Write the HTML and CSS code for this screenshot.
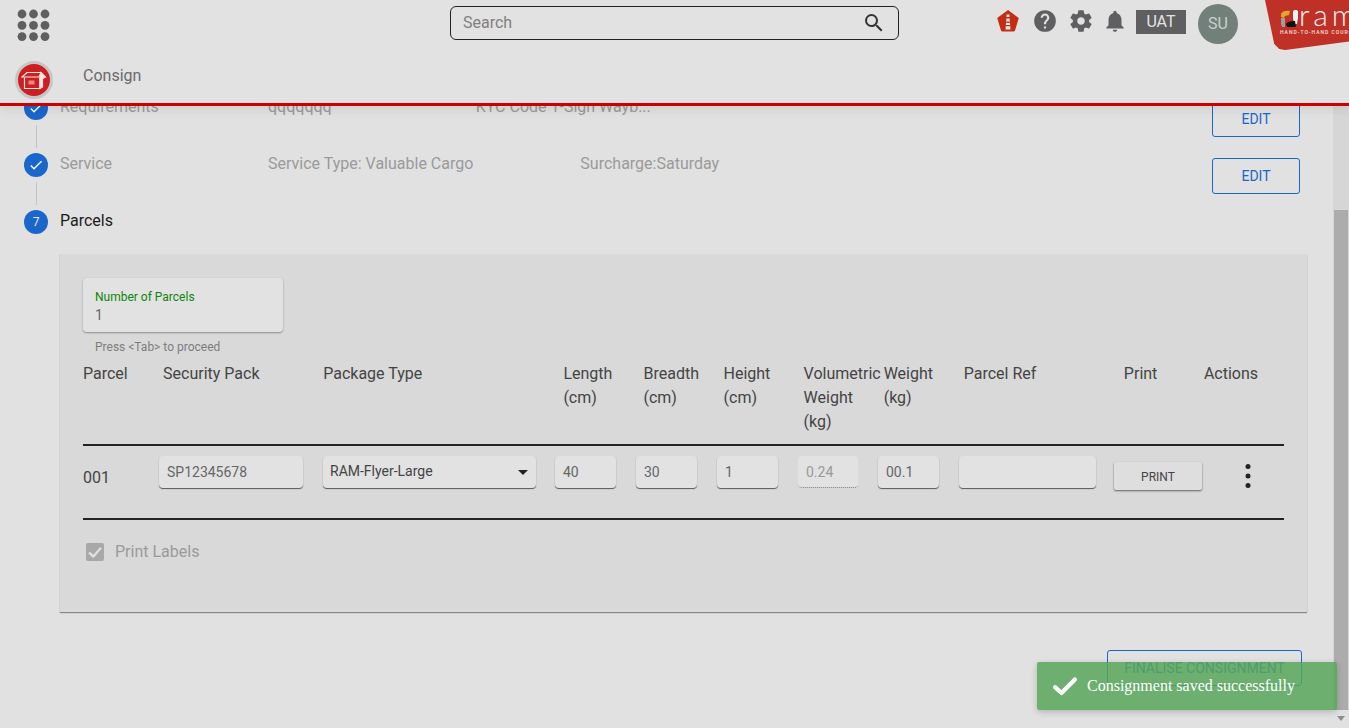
FILE: index.html
```html
<!DOCTYPE html>
<html lang="en">
<head>
  <meta charset="UTF-8" />
  <title>Consign</title>
  <link rel="stylesheet" href="styles.css">
</head>
<body>
  <div class="app">
    <header class="topbar">
      <div class="topbar-row">
        <svg class="apps-icon" width="34" height="34" viewBox="0 0 34 34">
          <g fill="#5f5f5f">
            <circle cx="5" cy="5" r="4.4"/><circle cx="16.500" cy="5" r="4.4"/><circle cx="28" cy="5" r="4.4"/>
            <circle cx="5" cy="16.300" r="4.4"/><circle cx="16.500" cy="16.300" r="4.4"/><circle cx="28" cy="16.300" r="4.4"/>
            <circle cx="5" cy="27.600" r="4.4"/><circle cx="16.500" cy="27.600" r="4.4"/><circle cx="28" cy="27.600" r="4.4"/>
          </g>
        </svg>
        <div class="search">
          <span class="search-text">Search</span>
          <svg width="24" height="24" viewBox="0 0 24 24"><path fill="#333" d="M15.500 14h-.79l-.28-.27A6.470 6.470 0 0 0 16 9.500 6.500 6.500 0 1 0 9.500 16c1.610 0 3.090-.59 4.230-1.570l.27.28v.79l5 4.990L20.490 19l-4.990-5zm-6 0C7.010 14 5 11.990 5 9.500S7.010 5 9.500 5 14 7.010 14 9.500 11.990 14 9.500 14z"/></svg>
        </div>
        <div class="tools">
          <svg class="tool-light" width="24" height="24" viewBox="0 0 24 24">
            <path fill="#c42d14" d="M12 1 22.800 9 19 21.500a1.500 1.500 0 0 1-1.400 1H6.400a1.500 1.500 0 0 1-1.400-1L1.200 9z"/>
            <path fill="#e8e8e8" d="M10.500 5.500h3v2.500h-3zM10.400 9.500h3.200l.9 11h-5z"/>
            <path fill="#c42d14" d="M9.800 12.500h4.400v1.200H9.800zM9.600 16h4.800v1.200H9.600z"/>
          </svg>
          <svg class="tool-help" width="26" height="26" viewBox="0 0 24 24"><path fill="#5f5e60" d="M12 2a10 10 0 1 0 0 20 10 10 0 0 0 0-20zm1 17h-2v-2h2v2zm2.070-7.750-.9.920C13.450 12.900 13 13.500 13 15h-2v-.5c0-1.100.45-2.100 1.170-2.830l1.240-1.260c.37-.36.590-.86.590-1.410 0-1.100-.9-2-2-2s-2 .9-2 2H8c0-2.210 1.790-4 4-4s4 1.790 4 4c0 .88-.36 1.680-.930 2.250z"/></svg>
          <svg class="tool-gear" width="26" height="26" viewBox="0 0 24 24"><path fill="#5f5e60" d="M19.430 12.980c.04-.32.070-.64.070-.98s-.03-.66-.07-.98l2.110-1.650c.19-.15.240-.42.120-.64l-2-3.460c-.12-.22-.39-.3-.61-.22l-2.490 1c-.52-.4-1.080-.73-1.690-.98l-.38-2.650A.488.488 0 0 0 14 2h-4c-.25 0-.46.18-.49.42l-.38 2.650c-.61.25-1.170.59-1.690.98l-2.490-1c-.23-.09-.49 0-.61.22l-2 3.460c-.13.22-.07.49.12.64l2.110 1.650c-.04.32-.07.65-.07.98s.03.66.07.98l-2.110 1.650c-.19.15-.24.42-.12.64l2 3.460c.12.22.39.3.61.22l2.490-1c.52.4 1.080.73 1.690.98l.38 2.650c.03.24.24.42.49.42h4c.25 0 .46-.18.49-.42l.38-2.650c.61-.25 1.170-.59 1.690-.98l2.490 1c.23.09.49 0 .61-.22l2-3.460c.12-.22.07-.49-.12-.64l-2.110-1.650zM12 15.500c-1.930 0-3.500-1.570-3.500-3.500s1.570-3.500 3.500-3.500 3.500 1.570 3.500 3.500-1.570 3.500-3.500 3.500z"/></svg>
          <svg class="tool-bell" width="26" height="26" viewBox="0 0 24 24"><path fill="#5f5e60" d="M12 22c1.100 0 2-.9 2-2h-4c0 1.100.9 2 2 2zm6-6v-5c0-3.070-1.630-5.640-4.500-6.320V4c0-.83-.67-1.500-1.500-1.500s-1.500.67-1.500 1.500v.68C7.640 5.360 6 7.920 6 11v5l-2 2v1h16v-1l-2-2z"/></svg>
          <span class="env-tag">UAT</span>
          <span class="avatar">SU</span>
        </div>
      </div>
      <div class="topbar-row nav-row">
        <span class="module-badge">
          <svg width="26" height="22" viewBox="0 0 26 22" fill="none" stroke="#f6e6e6" stroke-width="1.200">
            <path d="M3.500 8.500V19.500H19V8.500"/>
            <path d="M1 8 6 3.500H20L18 8H1z"/>
            <path d="M20 3.500 24.500 8 21.500 9.500V18L19 19.500V8.500z" fill="#f6e6e6"/>
            <rect x="7.500" y="11.500" width="6" height="4" fill="#e58a8a" stroke="none"/>
          </svg>
        </span>
        <span class="module-name">Consign</span>
      </div>
    </header>

    <div class="logo">
      <svg class="logo-mark" width="20" height="20" viewBox="0 0 20 20">
        <path fill="#e3a52a" d="M1 5c1-3 5-4 9-3l-1 4-4 1-1 2-3-1z"/>
        <path fill="#9d9d9d" d="M1 9h4v9H2l-1-3z"/>
        <path fill="#f2f2f2" d="M13 2c1-1.500 4-1.500 5 0v7l-1 6h-3l-1-6z"/>
        <path fill="#111" d="M6 15c2-3 6-3 9-3l1 6H7z"/>
      </svg>
      <span class="logo-name">ram</span>
      <span class="logo-tag">HAND-TO-HAND COURIERS</span>
    </div>

    <main class="content">
      <div class="step">
        <div class="step-mark">
          <span class="step-dot"><svg width="16" height="16" viewBox="0 0 24 24"><path fill="#fff" d="M9 16.200 4.800 12l-1.400 1.400L9 19 21 7l-1.400-1.400z"/></svg></span>
          <span class="step-line"></span>
        </div>
        <span class="step-title">Requirements</span>
        <span class="step-info col-short">qqqqqqq</span>
        <span class="step-info">KYC Code 1-Sign Wayb...</span>
        <button class="edit-btn">EDIT</button>
      </div>
      <div class="step">
        <div class="step-mark">
          <span class="step-dot"><svg width="16" height="16" viewBox="0 0 24 24"><path fill="#fff" d="M9 16.200 4.800 12l-1.400 1.400L9 19 21 7l-1.400-1.400z"/></svg></span>
          <span class="step-line"></span>
        </div>
        <span class="step-title">Service</span>
        <span class="step-info col-a">Service Type: Valuable Cargo</span>
        <span class="step-info">Surcharge:Saturday</span>
        <button class="edit-btn">EDIT</button>
      </div>
      <div class="step">
        <div class="step-mark">
          <span class="step-dot">7</span>
        </div>
        <span class="step-title current">Parcels</span>
      </div>

      <section class="panel">
        <div class="count-field">
          <label>Number of Parcels</label>
          <span>1</span>
        </div>
        <p class="helper">Press &lt;Tab&gt; to proceed</p>

        <div class="table-head">
          <div>Parcel</div>
          <div class="span-2">Security Pack</div>
          <div class="span-3">Package Type</div>
          <div>Length (cm)</div>
          <div>Breadth (cm)</div>
          <div>Height (cm)</div>
          <div>Volumetric Weight (kg)</div>
          <div>Weight (kg)</div>
          <div class="span-2">Parcel Ref</div>
          <div>Print</div>
          <div>Actions</div>
        </div>

        <div class="table-row">
          <span class="parcel-no">001</span>
          <input class="cell w-pack" value="SP12345678" readonly>
          <div class="cell w-type">RAM-Flyer-Large<span class="caret"></span></div>
          <input class="cell w-num" value="40" readonly>
          <input class="cell w-num" value="30" readonly>
          <input class="cell w-num" value="1" readonly>
          <input class="cell w-vol disabled" value="0.24" disabled>
          <input class="cell w-num" value="00.1" readonly>
          <input class="cell w-ref" value="" readonly>
          <button class="print-btn">PRINT</button>
          <svg class="kebab" width="6" height="26" viewBox="0 0 6 26"><g fill="#222"><circle cx="3" cy="3.500" r="2.500"/><circle cx="3" cy="13" r="2.500"/><circle cx="3" cy="22.500" r="2.500"/></g></svg>
        </div>

        <div class="print-labels">
          <span class="checkbox"><svg width="18" height="18" viewBox="0 0 18 18"><path fill="none" stroke="#dedede" stroke-width="2.400" d="M3 9.500 7.300 13.500 15 4.800"/></svg></span>
          <span>Print Labels</span>
        </div>
      </section>

      <div class="finalise-row">
        <button class="finalise-btn">FINALISE CONSIGNMENT</button>
      </div>
    </main>

    <div class="scrollbar">
      <div class="scroll-track"><div class="scroll-thumb"></div></div>
      <div class="scroll-end"><span class="scroll-arrow"></span></div>
    </div>

    <div class="toast">
      <svg width="28" height="28" viewBox="0 0 24 24"><path fill="none" stroke="#fff" stroke-width="3.600" stroke-linecap="round" stroke-linejoin="round" d="M3.500 13 9 18 20.500 6.500"/></svg>
      <span>Consignment saved successfully</span>
    </div>
  </div>
</body>
</html>
```

FILE: styles.css
```css
* {
  box-sizing: border-box;
}

html, body {
  margin: 0;
  height: 100%;
  overflow: hidden;
}

body {
  font-family: Roboto, "Liberation Sans", sans-serif;
  font-size: 16px;
  background: #e1e1e1;
  color: #333;
}

.app {
  position: relative;
  display: flex;
  width: 1349px;
  height: 728px;
  overflow: hidden;
}

/* header */
.topbar {
  position: absolute;
  top: 0;
  left: 0;
  right: 0;
  height: 106px;
  background: #e2e2e2;
  border-bottom: 3px solid #cc0000;
  box-shadow: 0 4px 10px rgba(0,0,0,0.08);
  z-index: 5;
}

.topbar-row {
  display: flex;
  align-items: flex-start;
  height: 51px;
}

.apps-icon {
  margin: 9px 0 0 17px;
}

.search {
  display: flex;
  align-items: center;
  justify-content: space-between;
  width: 449px;
  height: 34px;
  margin: 6px 0 0 399px;
  padding: 0 12px;
  border: 1px solid #222;
  border-radius: 6px;
}

.search-text {
  margin-top: -2px;
  color: #808080;
}

.tools {
  display: flex;
  align-items: center;
  margin: 4px 0 0 97px;
  height: 40px;
}

.tool-light {
  margin-top: -6px;
}

.tool-help {
  margin: -6px 0 0 12px;
}

.tool-gear {
  margin: -6px 0 0 10px;
}

.tool-bell {
  margin: -6px 0 0 8px;
}

.env-tag {
  width: 50px;
  height: 24px;
  margin: -4px 0 0 8px;
  background: #5f5e60;
  color: #e4e4e4;
  line-height: 24px;
  text-align: center;
}

.avatar {
  width: 40px;
  height: 40px;
  margin-left: 12px;
  border-radius: 50%;
  background: #728079;
  color: #c9cfcc;
  line-height: 40px;
  text-align: center;
}

.nav-row {
  height: 49px;
}

.module-badge {
  display: flex;
  align-items: center;
  justify-content: center;
  width: 38px;
  height: 38px;
  margin: 10px 0 0 15px;
  border: 3px solid #c6c6c6;
  border-radius: 50%;
  background: #cd1f1f;
}

.module-name {
  margin: 13px 0 0 30px;
  color: #6a6a6a;
  line-height: 24px;
}

/* logo, hangs over the header corner */
.logo {
  position: absolute;
  top: 0;
  right: 0;
  width: 84px;
  height: 50px;
  overflow: hidden;
  background: #bf3026;
  clip-path: polygon(0 0, 100% 0, 100% 83%, 24% 100%, 17% 98%, 11% 88%);
  z-index: 6;
}

.logo-mark {
  position: absolute;
  top: 9px;
  left: 15px;
}

.logo-name {
  position: absolute;
  top: -4px;
  left: 34px;
  font-family: Lato, sans-serif;
  font-weight: 300;
  font-size: 30px;
  letter-spacing: 4px;
  color: #f5f5f5;
  white-space: nowrap;
}

.logo-tag {
  position: absolute;
  top: 29px;
  left: 15px;
  font-size: 5px;
  font-weight: 500;
  letter-spacing: 1px;
  color: #f3e1df;
  white-space: nowrap;
}

/* stepper */
.content {
  flex: 1;
  padding-top: 79px;
}

.step {
  display: flex;
  height: 57px;
  padding-right: 33px;
}

.step-mark {
  display: flex;
  flex-direction: column;
  width: 60px;
  padding: 17px 0 0 24px;
}

.step-dot {
  display: flex;
  flex: none;
  align-items: center;
  justify-content: center;
  width: 24px;
  height: 24px;
  border-radius: 50%;
  background: #1a66cc;
  color: #e8e8e8;
  font-size: 12px;
}

.step-line {
  flex: none;
  width: 1px;
  height: 23px;
  margin: 5px 0 0 12px;
  background: #c4c4c4;
}

.step-title,
.step-info {
  padding-top: 16px;
  line-height: 24px;
  color: #9a9a9a;
}

.step-title {
  width: 208px;
}

.step-title.current {
  color: #1c1c1c;
}

.step-info.col-a {
  margin-right: 107px;
}

.step-info.col-short {
  margin-right: 144px;
}

.edit-btn {
  width: 88px;
  height: 36px;
  margin: 22px 0 0 auto;
  border: 1px solid #1a66cc;
  border-radius: 3px;
  background: transparent;
  color: #1a66cc;
  font-family: inherit;
  font-size: 14px;
}

/* parcels panel */
.panel {
  height: 358px;
  margin: 4px 26px 0 60px;
  padding: 24px 23px 0;
  background: #d9d9d9;
  box-shadow: 0 1px 1px rgba(0,0,0,0.4);
}

.count-field {
  display: flex;
  flex-direction: column;
  width: 200px;
  height: 54px;
  padding: 11px 12px 0;
  border-radius: 4px;
  background: #e2e2e2;
  box-shadow: 0 1px 2px rgba(0,0,0,0.35);
}

.count-field label {
  color: #0d850d;
  font-size: 12px;
  line-height: 16px;
}

.count-field span {
  margin-top: 1px;
  color: #666;
  font-size: 14px;
  line-height: 18px;
}

.helper {
  margin: 7px 0 0 12px;
  color: #7d7d7d;
  font-size: 12px;
  line-height: 16px;
}

.table-head {
  display: grid;
  grid-template-columns: repeat(15, 1fr);
  height: 84px;
  margin-top: 7px;
  border-bottom: 2px solid #222;
  color: #444;
  line-height: 24px;
}

.span-2 {
  grid-column: span 2;
}

.span-3 {
  grid-column: span 3;
}

.table-row {
  display: flex;
  align-items: flex-start;
  gap: 20px;
  height: 74px;
  padding-top: 10px;
  border-bottom: 2px solid #222;
}

.parcel-no {
  width: 56px;
  margin-top: 10px;
  color: #444;
  line-height: 24px;
}

.cell {
  position: relative;
  height: 32px;
  padding: 0 8px;
  border: 0;
  border-radius: 4px;
  background: #e2e2e2;
  box-shadow: 0 1px 1px rgba(0,0,0,0.6);
  color: #666;
  font-family: inherit;
  font-size: 14px;
  line-height: 30px;
  outline: none;
}

.w-pack {
  width: 144px;
}

.w-type {
  width: 213px;
  padding-left: 7px;
  margin-right: -1px;
  color: #444;
}

.w-num {
  width: 61px;
}

.w-vol {
  width: 60px;
}

.w-ref {
  width: 137px;
}

.disabled {
  color: #999;
  box-shadow: none;
  border-bottom: 1px dotted #777;
}

.caret {
  position: absolute;
  top: 14px;
  right: 8px;
  border-top: 5px solid #222;
  border-left: 5px solid transparent;
  border-right: 5px solid transparent;
}

.print-btn {
  width: 88px;
  height: 28px;
  margin: 6px 0 0 -2px;
  padding-top: 2px;
  border: 0;
  border-radius: 2px;
  background: #dedede;
  box-shadow: 0 1px 2px rgba(0,0,0,0.55);
  color: #444;
  font-family: inherit;
  font-size: 12px;
}

.kebab {
  margin: 7px 0 0 23px;
}

.print-labels {
  display: flex;
  align-items: center;
  gap: 11px;
  margin: 20px 0 0 3px;
  color: #9a9a9a;
  line-height: 24px;
}

.checkbox {
  display: flex;
  width: 18px;
  height: 18px;
  border-radius: 2px;
  background: #a8a8a8;
}

.finalise-row {
  display: flex;
  justify-content: flex-end;
  padding: 38px 31px 0 0;
}

.finalise-btn {
  width: 195px;
  height: 36px;
  border: 1px solid #1a66cc;
  border-radius: 3px;
  background: transparent;
  color: #1a66cc;
  font-family: inherit;
  font-size: 14px;
}

/* scrollbar */
.scrollbar {
  display: flex;
  flex-direction: column;
  width: 16px;
  height: 728px;
}

.scroll-track {
  display: flex;
  flex: 1;
  padding-top: 210px;
  background: #d6d6d6;
}

.scroll-thumb {
  width: 14px;
  height: 500px;
  margin-left: 1px;
  background: #acacac;
}

.scroll-end {
  display: flex;
  justify-content: center;
  height: 18px;
  padding-top: 6px;
  background: #e1e1e1;
}

.scroll-arrow {
  height: 0;
  border-top: 5px solid #8e8e8e;
  border-left: 4px solid transparent;
  border-right: 4px solid transparent;
}

/* toast */
.toast {
  position: absolute;
  left: 1037px;
  top: 662px;
  display: flex;
  align-items: center;
  gap: 8px;
  width: 300px;
  height: 48px;
  padding-left: 14px;
  border-radius: 2px;
  background: rgba(88,166,91,0.85);
  box-shadow: 0 2px 6px rgba(0,0,0,0.2);
  color: #fff;
  font-family: "Liberation Serif", serif;
  font-size: 16px;
  z-index: 8;
}
```
